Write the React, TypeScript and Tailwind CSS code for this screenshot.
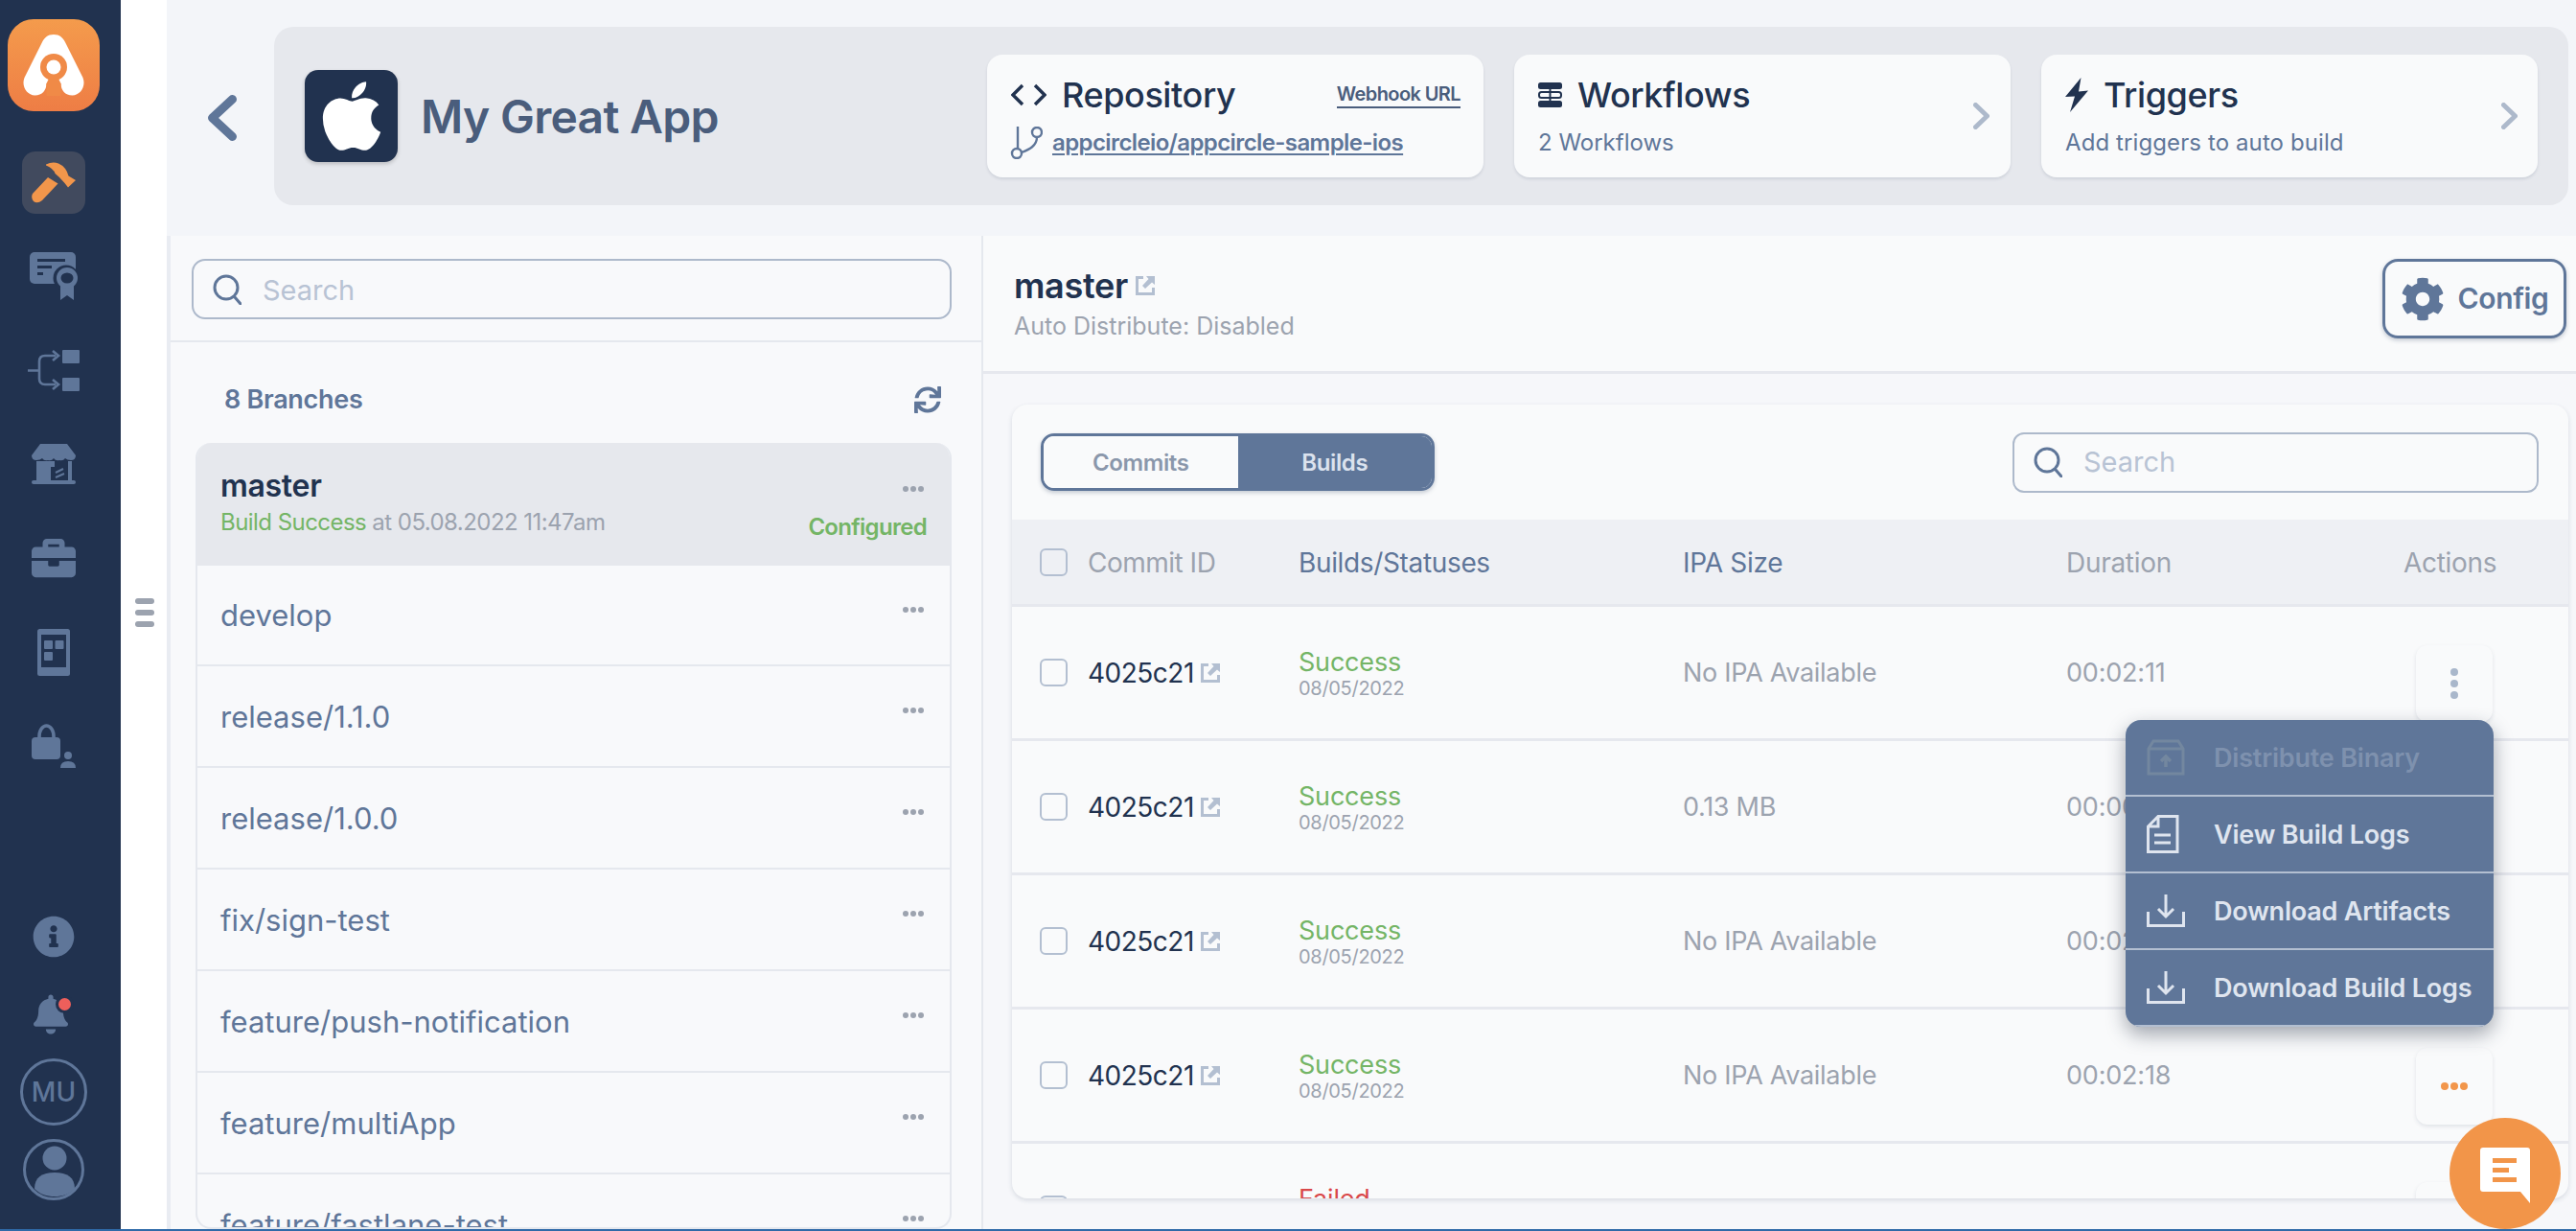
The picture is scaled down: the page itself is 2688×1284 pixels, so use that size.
import React from "react";
import { FaApple, FaBell, FaBriefcase, FaCog, FaInfoCircle, FaSync } from "react-icons/fa";

function Logo() {
  return (
    <div className="mt-[20px] w-[96px] h-[96px] rounded-[27px] bg-gradient-to-b from-[#f49b4c] to-[#ee7d45] flex items-center justify-center">
      <svg width="64" height="64" viewBox="0 0 64 64">
        <path d="M32 0C25.5 0 22.5 3.5 20 8L1.5 45C-2 54 4 63.5 12.5 63.5C20 63.5 24.5 58 24.5 51L39.5 51C39.5 58 44 63.5 51.5 63.5C60 63.5 66 54 62.5 45L44 8C41.5 3.5 38.5 0 32 0Z" fill="#fff" />
        <circle cx="32" cy="34" r="14" fill="#f08a47" />
        <path d="M27 46L24.5 51V64H39.5V51L37 46Z" fill="#f08a47" />
        <circle cx="32" cy="34" r="7.5" fill="#fff" />
      </svg>
    </div>
  );
}

function Hammer() {
  return (
    <svg width="46" height="43" viewBox="0 0 46 43" fill="#f2964b">
      <path d="M15 2.5Q22 -1 28 1.5Q36 5 38.5 14.5L46 19L38 26.5L34.5 22L29 16L24.5 12Q23 7 15 3.5Z" />
      <path d="M1 33L17 16L27.5 22.5L11 40Q6 44 2 41Q-1 37 1 33Z" />
    </svg>
  );
}

function Cert() {
  return (
    <svg width="50" height="50" viewBox="0 0 50 50">
      <rect x="0" y="0" width="48" height="33" rx="5" fill="#5f7699" />
      <rect x="8" y="7" width="29" height="3" fill="#21324f" />
      <rect x="8" y="14" width="15" height="3" fill="#21324f" />
      <rect x="8" y="21" width="6" height="3" fill="#21324f" />
      <circle cx="38" cy="27" r="13.5" fill="#21324f" />
      <path d="M32 34V50L39 45L46 50V34Z" fill="#5f7699" />
      <circle cx="39" cy="27" r="11" fill="#5f7699" />
      <ellipse cx="39" cy="27" rx="6.5" ry="5.5" fill="#21324f" />
    </svg>
  );
}

function Flow() {
  return (
    <svg width="54" height="43" viewBox="0 0 54 43" fill="none">
      <path d="M0 21.5H12M29 6H18Q12 6 12 12V30Q12 36 18 36H29" stroke="#5f7699" strokeWidth="2.6" />
      <path d="M26 1L32 6L26 11M26 31L32 36L26 41" stroke="#5f7699" strokeWidth="2.6" />
      <rect x="36" y="0" width="18" height="14" rx="1" fill="#5f7699" />
      <rect x="36" y="29" width="18" height="14" rx="1" fill="#5f7699" />
    </svg>
  );
}

function Store() {
  return (
    <svg width="46" height="42" viewBox="0 0 46 42">
      <path d="M9 0H37L46 12Q46 17 41 17Q37 17 35 15Q33 18 29 17Q25 18 23 15Q21 18 17 17Q13 18 11 15Q9 17 5 17Q0 17 0 12Z" fill="#5f7699" />
      <rect x="5" y="18" width="15" height="20" fill="#5f7699" />
      <rect x="20" y="18" width="4" height="6" fill="#5f7699" />
      <rect x="38" y="18" width="4" height="20" fill="#5f7699" />
      <path d="M25 30L33 26M25 35L34 31" stroke="#5f7699" strokeWidth="2" />
      <rect x="0" y="38" width="46" height="4" rx="2" fill="#5f7699" />
    </svg>
  );
}

function Tablet() {
  return (
    <svg width="34" height="49" viewBox="0 0 34 49" fill="none">
      <rect x="0" y="0" width="34" height="49" rx="2.5" fill="#5f7699" />
      <rect x="4" y="6" width="26" height="34" fill="#21324f" />
      <rect x="7" y="12" width="9" height="9" rx="1" fill="#5f7699" />
      <rect x="18.5" y="12" width="9" height="9" rx="1" fill="#5f7699" />
      <rect x="7" y="24" width="9" height="9" rx="1" fill="#5f7699" />
    </svg>
  );
}

function LockUser() {
  return (
    <svg width="46" height="46" viewBox="0 0 46 46" fill="none">
      <path d="M8 18V13C8 6 12 2 15.5 2C19 2 23 6 23 13V18" stroke="#5f7699" strokeWidth="3.6" />
      <rect x="0" y="14" width="30" height="23" rx="4" fill="#5f7699" />
      <circle cx="38" cy="33" r="4" fill="#5f7699" />
      <path d="M30 46Q30 39 38 39Q46 39 46 46Z" fill="#5f7699" />
    </svg>
  );
}

function Avatar() {
  return (
    <svg width="64" height="64" viewBox="0 0 64 64" fill="none">
      <circle cx="32" cy="32" r="30.5" stroke="#5f7699" strokeWidth="3" />
      <circle cx="33" cy="20" r="12.5" fill="#5f7699" />
      <path d="M12 52C12 40 20 35 33 35C46 35 54 40 54 52C48 58 41 60 33 60C25 60 18 58 12 52Z" fill="#5f7699" />
    </svg>
  );
}

function Sidebar() {
  const slot = "h-[98px] w-full flex items-center justify-center shrink-0";
  const low = "h-[81px] w-full flex items-center justify-center shrink-0";
  return (
    <aside className="w-[126px] shrink-0 pr-[14px] bg-[#21324f] flex flex-col items-center">
      <Logo />
      <div className="h-[25px] shrink-0" />
      <div className={slot}>
        <div className="w-[66px] h-[65px] rounded-[14px] bg-[#414a5e] flex items-center justify-center">
          <Hammer />
        </div>
      </div>
      <div className={slot}><Cert /></div>
      <div className={slot}><Flow /></div>
      <div className={slot}><Store /></div>
      <div className={slot}><FaBriefcase className="text-[#5f7699] w-[46px] h-[46px]" /></div>
      <div className={slot}><Tablet /></div>
      <div className={slot}><LockUser /></div>
      <div className="mt-auto mb-[22px] w-full flex flex-col">
        <div className={low}><FaInfoCircle className="text-[#5f7699] w-[44px] h-[44px]" /></div>
        <div className={low}>
          <div className="relative w-[36px] h-[44px] -ml-[6px]">
            <FaBell className="text-[#5f7699] w-[36px] h-[44px]" />
            <span className="absolute right-[-6px] top-[2px] w-[13px] h-[13px] rounded-full bg-[#ee5f5b] box-content border-[3px] border-[#21324f]" />
          </div>
        </div>
        <div className={low}>
          <div className="w-[70px] h-[70px] rounded-full border-[3px] border-[#5f7699] flex items-center justify-center text-[28px] font-medium text-[#5f7699]">MU</div>
        </div>
        <div className={low}><Avatar /></div>
      </div>
    </aside>
  );
}

function Chevron({ cls, w, h, sw, dir }: { cls: string; w: number; h: number; sw: number; dir: "l" | "r" }) {
  const d = dir === "l" ? `M${w - sw / 2} ${sw / 2}L${sw / 2} ${h / 2}L${w - sw / 2} ${h - sw / 2}` : `M${sw / 2} ${sw / 2}L${w - sw / 2} ${h / 2}L${sw / 2} ${h - sw / 2}`;
  return (
    <svg width={w} height={h} viewBox={`0 0 ${w} ${h}`} fill="none" className={cls}>
      <path d={d} stroke="currentColor" strokeWidth={sw} strokeLinecap="round" strokeLinejoin="round" />
    </svg>
  );
}

function GitIcon() {
  return (
    <svg width="34" height="34" viewBox="0 0 34 34" fill="none" stroke="#5f7699" strokeWidth="2.4" className="shrink-0">
      <path d="M8 0V23" />
      <circle cx="7" cy="28" r="5" />
      <circle cx="28" cy="6" r="5" />
      <path d="M28 11C28 20 20 24 12 27" />
    </svg>
  );
}

function WorkflowIcon() {
  return (
    <svg width="25" height="26" viewBox="0 0 25 26" fill="none" className="shrink-0">
      <rect x="0" y="0" width="25" height="7" rx="2.5" fill="#21324f" />
      <rect x="0" y="19" width="25" height="7" rx="2.5" fill="#21324f" />
      <rect x="1" y="10" width="23" height="6" rx="2.5" stroke="#21324f" strokeWidth="2" />
      <path d="M12.5 6V20" stroke="#21324f" strokeWidth="2" />
    </svg>
  );
}

function CardTitle({ icon, label }: { icon: React.ReactNode; label: string }) {
  return (
    <div className="flex items-center h-[44px] gap-[16px]">
      {icon}
      <span className="text-[36px] font-medium text-[#21324f] tracking-[-0.4px] leading-[44px]">{label}</span>
    </div>
  );
}

function Header() {
  const card = "w-[518px] h-[128px] rounded-[16px] bg-[#f9fafb] shadow-[0_2px_3px_rgba(40,60,90,0.12)] pl-[25px] pr-[24px] pt-[20px] relative";
  return (
    <header className="h-[246px] shrink-0 bg-[#f3f5f9] flex pt-[28px] items-start">
      <div className="ml-[43px] mr-[39px] mt-[71px] text-[#5f7699] flex">
        <Chevron cls="" w={30} h={48} sw={9} dir="l" />
      </div>
      <div className="w-[2394px] h-[186px] rounded-[20px] bg-[#e6e8ed] flex items-center pl-[32px] pr-[32px]">
        <div className="w-[97px] h-[96px] rounded-[14px] bg-[#21324f] flex items-center justify-center shadow-[0_2px_4px_rgba(0,0,0,0.2)]">
          <FaApple className="text-white w-[82px] h-[82px]" />
        </div>
        <div className="ml-[24px] mt-[2px] text-[48px] font-semibold text-[#4a5d7c] tracking-[-0.7px]">My Great App</div>
        <div className="ml-auto flex gap-[32px]">
          <div className={card}>
            <div className="flex items-center justify-between">
              <CardTitle
                icon={
                  <svg width="37" height="24" viewBox="0 0 37 24" fill="none" stroke="#21324f" strokeWidth="3.4" className="shrink-0">
                    <path d="M12 2L2 12L12 22M25 2L35 12L25 22" />
                  </svg>
                }
                label="Repository"
              />
              <span className="text-[20px] font-semibold text-[#4a5d7c] border-b-[2px] border-[#4a5d7c] leading-[26px] tracking-[-0.6px]">Webhook URL</span>
            </div>
            <div className="mt-[10px] h-[36px] flex items-center gap-[10px] -ml-[1px]">
              <GitIcon />
              <span className="text-[24px] font-semibold text-[#5f7699] underline decoration-[2px] underline-offset-[3px] tracking-[-0.6px]">appcircleio/appcircle-sample-ios</span>
            </div>
          </div>
          <div className={card}>
            <CardTitle icon={<WorkflowIcon />} label="Workflows" />
            <div className="mt-[10px] h-[36px] flex items-center text-[24px] text-[#5f7699]">2 Workflows</div>
            <Chevron cls="absolute right-[22px] top-[50px] text-[#adb9cb]" w={17} h={28} sw={5} dir="r" />
          </div>
          <div className={card}>
            <CardTitle
              icon={
                <svg width="24" height="36" viewBox="0 0 24 36" fill="#21324f" className="shrink-0">
                  <path d="M16.5 0L0 20L10 19.5L5 36L24 13.5L14 14.5Z" />
                </svg>
              }
              label="Triggers"
            />
            <div className="mt-[10px] h-[36px] flex items-center text-[24px] text-[#5f7699] tracking-[0.1px]">Add triggers to auto build</div>
            <Chevron cls="absolute right-[21px] top-[50px] text-[#adb9cb]" w={17} h={28} sw={5} dir="r" />
          </div>
        </div>
      </div>
    </header>
  );
}

function SearchIcon() {
  return (
    <svg width="30" height="32" viewBox="0 0 30 32" fill="none" stroke="#5f7699" strokeWidth="3" className="shrink-0">
      <circle cx="14" cy="14" r="12" />
      <path d="M23 24L29 31" strokeLinecap="round" />
    </svg>
  );
}

function Dots({ cls }: { cls: string }) {
  return (
    <div className={`flex gap-[2px] shrink-0 ${cls}`}>
      <span className="w-[6px] h-[6px] rounded-full bg-[#9ca3af]" />
      <span className="w-[6px] h-[6px] rounded-full bg-[#9ca3af]" />
      <span className="w-[6px] h-[6px] rounded-full bg-[#9ca3af]" />
    </div>
  );
}

const branches = ["release/1.1.0", "release/1.0.0", "fix/sign-test", "feature/push-notification", "feature/multiApp", "feature/fastlane-test"];

function BranchRow({ name, h }: { name: string; h: string }) {
  return (
    <div className={`${h} shrink-0 border-b-[2px] border-[#e5e8ee] flex justify-between items-center pl-[24px] pr-[27px]`}>
      <span className="text-[31px] text-[#5f7699] pt-[2px]">{name}</span>
      <Dots cls="self-start mt-[43px]" />
    </div>
  );
}

function LeftPanel() {
  return (
    <section className="w-[852px] shrink-0 bg-[#f8f9fb] border-l-[4px] border-l-[#e9ecf2] border-r-[2px] border-r-[#e5e8ee] flex flex-col min-h-0">
      <div className="h-[111px] shrink-0 border-b-[2px] border-[#e5e8ee] pl-[22px] pt-[24px]">
        <div className="w-[793px] h-[63px] rounded-[14px] border-[2px] border-[#adb9cb] flex items-center pl-[20px] gap-[22px]">
          <SearchIcon />
          <span className="text-[29px] text-[#b8c3d4] pt-[2px]">Search</span>
        </div>
      </div>
      <div className="h-[105px] shrink-0 flex items-center justify-between pl-[56px] pr-[42px] pt-[15px]">
        <span className="text-[27px] font-semibold text-[#5f7699] tracking-[-0.3px]">8 Branches</span>
        <FaSync className="text-[#5f7699] w-[28px] h-[28px]" />
      </div>
      <div className="ml-[26px] w-[789px] flex-1 min-h-0 rounded-[16px] border-x-[2px] border-b-[2px] border-[#e5e8ee] overflow-hidden flex flex-col">
        <div className="h-[128px] shrink-0 bg-[#e6e8ed] flex flex-col pl-[24px] pr-[27px] relative pt-[26px]">
          <div className="text-[32px] font-semibold text-[#21324f] leading-[38px] tracking-[-0.3px]">master</div>
          <div className="mt-[1px] text-[24px] leading-[36px] text-[#9ca3af] tracking-[-0.55px]">
            <span className="text-[#74b566]">Build Success</span> at 05.08.2022 11:47am
          </div>
          <Dots cls="absolute right-[27px] top-[45px]" />
          <div className="absolute right-[24px] top-[72px] text-[24px] font-semibold text-[#74b566] leading-[32px] tracking-[-0.7px]">Configured</div>
        </div>
        <BranchRow name="develop" h="h-[105px]" />
        {branches.map((b) => (
          <BranchRow key={b} name={b} h="h-[106px]" />
        ))}
      </div>
    </section>
  );
}

function Ext() {
  return (
    <svg width="20" height="20" viewBox="0 0 20 20" className="shrink-0">
      <path d="M8 1.5H1.5V18.5H18.5V12" fill="none" stroke="#b3bfd1" strokeWidth="3" />
      <path d="M11 0H20V9L17 6.5L10 13L7 10L13.5 3Z" fill="#b3bfd1" />
    </svg>
  );
}

function Check() {
  return <span className="w-[29px] h-[29px] rounded-[6px] border-[2px] border-[#b3bfd1] shrink-0" />;
}

const rowGrid = "grid grid-cols-[270px_401px_400px_1fr] items-center pl-[29px] pr-[79px]";

function BuildRow({ size, dur, status, action }: { size?: string; dur?: string; status?: string; action?: React.ReactNode }) {
  const failed = status === "Failed";
  return (
    <div className={`${rowGrid} h-[140px] shrink-0 border-b-[3px] border-[#e6e8ee] relative`}>
      <div className="flex items-center">
        <Check />
        {!failed && <span className="ml-[21px] text-[28px] text-[#21324f] tracking-[-0.5px]">4025c21</span>}
        {!failed && <span className="ml-[7px]"><Ext /></span>}
      </div>
      <div className="flex flex-col">
        <span className={`text-[27px] leading-[32px] tracking-[-0.2px] ${failed ? "text-[#d9484a]" : "text-[#74b566]"}`}>{status ?? "Success"}</span>
        <span className="text-[20px] leading-[22px] text-[#9ca3af] tracking-[-0.3px]">08/05/2022</span>
      </div>
      <span className="text-[27px] text-[#9ca3af] tracking-[-0.3px] pt-[2px]">{size}</span>
      <span className="text-[27px] text-[#9ca3af] tracking-[-0.2px] pt-[2px]">{dur}</span>
      {action}
    </div>
  );
}

function ActionBtn({ children }: { children?: React.ReactNode }) {
  return (
    <div className="absolute right-[79px] top-[40px] w-[80px] h-[80px] rounded-[12px] bg-[#f9fafb] shadow-[0_2px_4px_rgba(40,60,90,0.12)] flex items-center justify-center">
      {children}
    </div>
  );
}

function DownloadIcon() {
  return (
    <svg width="40" height="34" viewBox="0 0 40 34" fill="none" stroke="#dfe5ef" strokeWidth="3" className="shrink-0">
      <path d="M1.5 18V32.5H38.5V18" />
      <path d="M20 0V23M12 15L20 23L28 15" />
    </svg>
  );
}

function Menu() {
  const item = "h-[80px] flex items-center pl-[22px] gap-[30px] border-b-[2px] border-[#b3bfd1] text-[27px] font-semibold tracking-[-0.2px]";
  return (
    <div className="absolute left-[1162px] top-[329px] w-[384px] rounded-[16px] bg-[#5f7699] overflow-hidden shadow-[0_8px_20px_rgba(30,40,60,0.4)]">
      <div className={`${item} text-[#7e91ae]`}>
        <svg width="40" height="38" viewBox="0 0 40 38" fill="none" stroke="#73879f" strokeWidth="3" className="shrink-0">
          <path d="M2 10L7 2H33L38 10V36H2ZM2 10H38" />
          <path d="M20 29V19M15 23L20 18L25 23" strokeWidth="3.5" />
        </svg>
        <span className="pt-[2px]">Distribute Binary</span>
      </div>
      <div className={`${item} text-[#dfe5ef]`}>
        <svg width="40" height="40" viewBox="0 0 40 40" fill="none" stroke="#dfe5ef" strokeWidth="3" className="shrink-0">
          <path d="M32 1.5V38.5H1.5V12L12 1.5ZM12 1.5V12H1.5" />
          <path d="M8 21H25M8 29H25" />
        </svg>
        <span className="pt-[2px]">View Build Logs</span>
      </div>
      <div className={`${item} text-[#dfe5ef]`}>
        <DownloadIcon />
        <span className="pt-[2px]">Download Artifacts</span>
      </div>
      <div className={`${item} text-[#dfe5ef] border-b-0`}>
        <DownloadIcon />
        <span className="pt-[2px]">Download Build Logs</span>
      </div>
    </div>
  );
}

function Card() {
  return (
    <div className="relative h-full rounded-[16px] bg-[#f9fafb] shadow-[0_2px_5px_rgba(40,60,90,0.15)] overflow-hidden flex flex-col">
      <div className="h-[120px] shrink-0 flex items-center justify-between pl-[30px] pr-[31px]">
        <div className="w-[411px] h-[60px] flex rounded-[14px] overflow-hidden border-[3px] border-[#5f7699] shadow-[0_2px_4px_rgba(40,60,90,0.25)]">
          <div className="flex-1 bg-[#f9fafb] flex items-center justify-center text-[24px] font-semibold text-[#8a97ab] tracking-[-0.4px] pt-[2px]">Commits</div>
          <div className="flex-1 bg-[#5f7699] flex items-center justify-center text-[24px] font-semibold text-[#dbe2ee] tracking-[-0.4px] pt-[2px]">Builds</div>
        </div>
        <div className="w-[549px] h-[63px] rounded-[12px] border-[2px] border-[#adb9cb] flex items-center pl-[20px] gap-[22px]">
          <SearchIcon />
          <span className="text-[29px] text-[#b8c3d4]">Search</span>
        </div>
      </div>
      <div className={`${rowGrid} h-[91px] shrink-0 bg-[#eef0f4] border-b-[3px] border-[#e6e8ee] text-[28px]`}>
        <div className="flex items-center">
          <Check />
          <span className="ml-[21px] text-[#9ca3af] tracking-[-0.5px] pt-[2px]">Commit ID</span>
        </div>
        <span className="text-[#5f7699] tracking-[-0.35px] pt-[2px]">Builds/Statuses</span>
        <span className="text-[#5f7699] tracking-[-0.3px] pt-[2px]">IPA Size</span>
        <span className="text-[#9ca3af] tracking-[-0.3px] pt-[2px]">Duration</span>
        <span className="absolute left-[1452px] text-[#9ca3af] tracking-[-0.3px] pt-[2px]">Actions</span>
      </div>
      <BuildRow size="No IPA Available" dur="00:02:11" action={
        <ActionBtn>
          <div className="flex flex-col gap-[4px]">
            <span className="w-[8px] h-[8px] rounded-full bg-[#a9b7cb]" />
            <span className="w-[8px] h-[8px] rounded-full bg-[#a9b7cb]" />
            <span className="w-[8px] h-[8px] rounded-full bg-[#a9b7cb]" />
          </div>
        </ActionBtn>
      } />
      <BuildRow size="0.13 MB" dur="00:00:32" />
      <BuildRow size="No IPA Available" dur="00:02:14" />
      <BuildRow size="No IPA Available" dur="00:02:18" action={
        <ActionBtn>
          <div className="flex gap-[2px]">
            <span className="w-[8px] h-[8px] rounded-full bg-[#f2964b]" />
            <span className="w-[8px] h-[8px] rounded-full bg-[#f2964b]" />
            <span className="w-[8px] h-[8px] rounded-full bg-[#f2964b]" />
          </div>
        </ActionBtn>
      } />
      <BuildRow status="Failed" action={<ActionBtn />} />
      <Menu />
    </div>
  );
}

function RightPanel() {
  return (
    <section className="flex-1 min-w-0 bg-[#f6f7fa] flex flex-col min-h-0">
      <div className="h-[144px] shrink-0 bg-[#f9fafb] border-b-[3px] border-[#e6e8ee] flex items-start justify-between pl-[32px] pr-[10px]">
        <div className="mt-[30px]">
          <div className="flex items-center gap-[8px]">
            <span className="text-[36px] font-semibold text-[#21324f] leading-[44px] tracking-[-0.3px]">master</span>
            <Ext />
          </div>
          <div className="text-[25px] text-[#9ca3af] leading-[32px] mt-[4px]">Auto Distribute: Disabled</div>
        </div>
        <div className="mt-[24px] w-[192px] h-[83px] rounded-[16px] border-[3px] border-[#5f7699] shadow-[0_2px_4px_rgba(40,60,90,0.25)] flex items-center justify-center gap-[14px]">
          <FaCog className="text-[#5f7699] w-[46px] h-[46px]" />
          <span className="text-[30px] font-semibold text-[#5f7699] tracking-[-0.4px]">Config</span>
        </div>
      </div>
      <div className="flex-1 min-h-0 pl-[30px] pr-[8px] pt-[32px] pb-[32px]">
        <Card />
      </div>
    </section>
  );
}

function ChatButton() {
  return (
    <div className="absolute left-[2556px] top-[1166px] w-[116px] h-[116px] rounded-full bg-[#f29549] flex items-center justify-center">
      <svg width="52" height="58" viewBox="0 0 52 58" className="mt-[3px]">
        <path d="M3 0H49Q52 0 52 3V58L42 46H3Q0 46 0 43V3Q0 0 3 0Z" fill="#fff" />
        <rect x="13" y="11" width="25" height="5" fill="#f29549" />
        <rect x="13" y="21" width="17" height="5" fill="#f29549" />
        <rect x="13" y="31" width="25" height="5" fill="#f29549" />
      </svg>
    </div>
  );
}

export default function App() {
  return (
    <div className="relative w-[2688px] h-[1284px] overflow-hidden flex border-b-[2px] border-[#2f6aa8] bg-white [font-family:Inter,sans-serif]">
      <Sidebar />
      <div className="w-[48px] shrink-0 bg-white flex flex-col items-center gap-[6px] pt-[624px] pl-[2px]">
        <span className="w-[20px] h-[6px] rounded-full bg-[#9ca3af]" />
        <span className="w-[20px] h-[6px] rounded-full bg-[#9ca3af]" />
        <span className="w-[20px] h-[6px] rounded-full bg-[#9ca3af]" />
      </div>
      <main className="flex-1 min-w-0 flex flex-col min-h-0">
        <Header />
        <div className="flex-1 flex min-h-0">
          <LeftPanel />
          <RightPanel />
        </div>
      </main>
      <ChatButton />
    </div>
  );
}
